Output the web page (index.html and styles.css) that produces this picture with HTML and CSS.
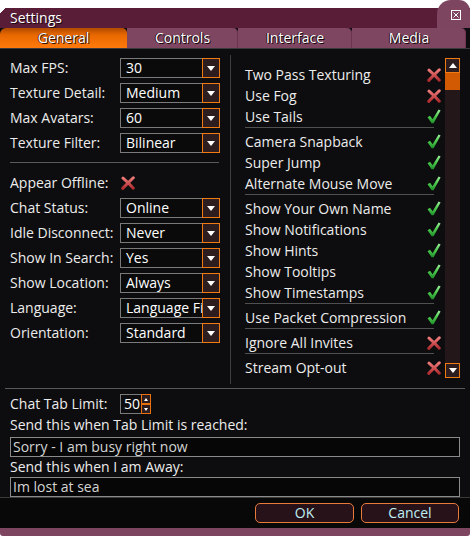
FILE: index.html
```html
<!DOCTYPE html>
<html>
<head>
<meta charset="utf-8">
<title>Settings</title>
<link rel="stylesheet" href="styles.css">
</head>
<body>
<svg class="defs" width="0" height="0">
  <defs>
    <linearGradient id="gchk" x1="0" y1="0" x2="0" y2="1">
      <stop offset="0" stop-color="#9cf09c"/>
      <stop offset="0.5" stop-color="#4cc94c"/>
      <stop offset="1" stop-color="#1e8f2a"/>
    </linearGradient>
    <linearGradient id="gx" x1="0" y1="0" x2="0" y2="1">
      <stop offset="0" stop-color="#ee7a7a"/>
      <stop offset="1" stop-color="#b02c30"/>
    </linearGradient>
    <symbol id="chk" viewBox="0 0 14 15">
      <path d="M0.5 8.2 L3 6.8 L5.6 10.2 L11.6 0.6 L13.6 1.6 L6.6 14.2 L4.6 14.2 Z" fill="url(#gchk)"/>
    </symbol>
    <symbol id="xx" viewBox="0 0 14 14">
      <path d="M2 2.2 Q7 6.5 12.3 12.2 M12.3 1.8 Q7 7 1.8 12.4" fill="none" stroke="url(#gx)" stroke-width="3" stroke-linecap="round"/>
    </symbol>
  </defs>
</svg>
<div class="window">
  <div class="titlebar">
    <span class="title">Settings</span>
    <div class="close-bump">
      <svg class="close-icon" width="10" height="10" viewBox="0 0 10 10"><rect x="0.5" y="0.5" width="9" height="9" fill="none" stroke="#fff"/><path d="M2.5 2.5 L7.5 7.5 M7.5 2.5 L2.5 7.5" stroke="#fff" stroke-width="1"/></svg>
    </div>
  </div>
  <div class="tabs">
    <div class="tab active t1">General</div>
    <div class="tab t2">Controls</div>
    <div class="tab t3">Interface</div>
    <div class="tab t4">Media</div>
  </div>
  <div class="body">
    <div class="columns">
      <div class="left">
        <div class="group">
          <div class="row"><span class="label">Max FPS:</span><div class="select"><span class="val">30</span><span class="dd"><i class="tri-down"></i></span></div></div>
          <div class="row"><span class="label">Texture Detail:</span><div class="select"><span class="val">Medium</span><span class="dd"><i class="tri-down"></i></span></div></div>
          <div class="row"><span class="label">Max Avatars:</span><div class="select"><span class="val">60</span><span class="dd"><i class="tri-down"></i></span></div></div>
          <div class="row"><span class="label">Texture Filter:</span><div class="select"><span class="val">Bilinear</span><span class="dd"><i class="tri-down"></i></span></div></div>
        </div>
        <div class="lsep"></div>
        <div class="group">
          <div class="row"><span class="label">Appear Offline:</span><svg class="icon off-icon" width="14" height="14"><use href="#xx"/></svg></div>
          <div class="row"><span class="label">Chat Status:</span><div class="select"><span class="val">Online</span><span class="dd"><i class="tri-down"></i></span></div></div>
          <div class="row"><span class="label">Idle Disconnect:</span><div class="select"><span class="val">Never</span><span class="dd"><i class="tri-down"></i></span></div></div>
          <div class="row"><span class="label">Show In Search:</span><div class="select"><span class="val">Yes</span><span class="dd"><i class="tri-down"></i></span></div></div>
          <div class="row"><span class="label">Show Location:</span><div class="select"><span class="val">Always</span><span class="dd"><i class="tri-down"></i></span></div></div>
          <div class="row"><span class="label">Language:</span><div class="select"><span class="val">Language Filter</span><span class="dd"><i class="tri-down"></i></span></div></div>
          <div class="row"><span class="label">Orientation:</span><div class="select"><span class="val">Standard</span><span class="dd"><i class="tri-down"></i></span></div></div>
        </div>
      </div>
      <div class="vsep"></div>
      <div class="right">
        <div class="list">
          <div class="item"><span>Two Pass Texturing</span><svg class="icon" width="14" height="14"><use href="#xx"/></svg></div>
          <div class="item"><span>Use Fog</span><svg class="icon" width="14" height="14"><use href="#xx"/></svg></div>
          <div class="item"><span>Use Tails</span><svg class="icon" width="14" height="15"><use href="#chk"/></svg></div>
          <div class="rsep"></div>
          <div class="item"><span>Camera Snapback</span><svg class="icon" width="14" height="15"><use href="#chk"/></svg></div>
          <div class="item"><span>Super Jump</span><svg class="icon" width="14" height="15"><use href="#chk"/></svg></div>
          <div class="item"><span>Alternate Mouse Move</span><svg class="icon" width="14" height="15"><use href="#chk"/></svg></div>
          <div class="rsep"></div>
          <div class="item"><span>Show Your Own Name</span><svg class="icon" width="14" height="15"><use href="#chk"/></svg></div>
          <div class="item"><span>Show Notifications</span><svg class="icon" width="14" height="15"><use href="#chk"/></svg></div>
          <div class="item"><span>Show Hints</span><svg class="icon" width="14" height="15"><use href="#chk"/></svg></div>
          <div class="item"><span>Show Tooltips</span><svg class="icon" width="14" height="15"><use href="#chk"/></svg></div>
          <div class="item"><span>Show Timestamps</span><svg class="icon" width="14" height="15"><use href="#chk"/></svg></div>
          <div class="rsep"></div>
          <div class="item"><span>Use Packet Compression</span><svg class="icon" width="14" height="15"><use href="#chk"/></svg></div>
          <div class="rsep"></div>
          <div class="item"><span>Ignore All Invites</span><svg class="icon" width="14" height="14"><use href="#xx"/></svg></div>
          <div class="rsep"></div>
          <div class="item"><span>Stream Opt-out</span><svg class="icon" width="14" height="14"><use href="#xx"/></svg></div>
        </div>
        <div class="scrollbar">
          <div class="sbtn"><i class="tri-up"></i></div>
          <div class="thumb"></div>
          <div class="track"></div>
          <div class="sbtn"><i class="tri-down"></i></div>
        </div>
      </div>
    </div>
    <div class="hsep"></div>
    <div class="bottom">
      <div class="chat-row">
        <span class="label">Chat Tab Limit:</span>
        <div class="spin"><span class="spin-val">50</span><span class="spin-btns"><span class="spin-half"><i class="tri-up small"></i></span><span class="spin-half"><i class="tri-down small"></i></span></span></div>
      </div>
      <div class="field-label first">Send this when Tab Limit is reached:</div>
      <div class="input">Sorry - I am busy right now</div>
      <div class="field-label">Send this when I am Away:</div>
      <div class="input">Im lost at sea</div>
    </div>
  </div>
  <div class="footer">
    <div class="btn ok">OK</div>
    <div class="btn cancel">Cancel</div>
  </div>
  <div class="strip"></div>
</div>
</body>
</html>
```

FILE: styles.css
```css
html, body {
  margin: 0;
  padding: 0;
  background: #ffffff;
}
body {
  font-family: "Open Sans", "Noto Sans", sans-serif;
  font-size: 14px;
  color: #ececec;
}
.defs {
  position: absolute;
  width: 0;
  height: 0;
}
.window {
  width: 470px;
  margin-top: 8px;
  display: flex;
  flex-direction: column;
}
.titlebar {
  height: 20px;
  position: relative;
  background: linear-gradient(135deg, transparent 4px, #5a1d37 4px);
}
.title {
  display: block;
  padding-left: 10px;
  line-height: 20px;
  color: #ffffff;
  text-shadow: 1px 1px 0 #1a0810;
}
.close-bump {
  position: absolute;
  right: 0;
  top: -8px;
  width: 33px;
  height: 28px;
  background: #7e4560;
  border-radius: 14px 11px 0 0;
}
.close-icon {
  position: absolute;
  left: 14px;
  top: 10px;
}
.tabs {
  display: flex;
  height: 20px;
  background: #0d0c0e;
}
.tab {
  line-height: 20px;
  text-align: center;
  color: #ffffff;
  background: #7e4660;
  border-radius: 0 5px 0 0;
  box-shadow: inset -1px 0 0 #6c3450;
  text-shadow: 1px 1px 0 #1a0a10, -1px 0 0 #2a1018;
}
.tab.active {
  background: linear-gradient(to bottom, #b04a00 0%, #e86800 35%, #ff7a0c 100%);
  border-radius: 6px 5px 0 0;
  box-shadow: none;
  text-shadow: 1px 1px 0 #3a1400, -1px 0 0 #5a2400;
}
.t1 { width: 127px; }
.t2 { width: 111px; }
.t3 { width: 114px; }
.t4 { width: 114px; }

.body {
  border-top: 1px solid #3a3a3c;
  background: #0d0c0e;
}
.columns {
  display: flex;
  height: 335px;
}
.left {
  width: 230px;
  box-sizing: border-box;
  padding: 9px 0 0 10px;
}
.group {
  display: flex;
  flex-direction: column;
  gap: 5px;
}
.row {
  display: flex;
  align-items: center;
  height: 20px;
}
.label {
  width: 110px;
  flex: none;
  white-space: nowrap;
  line-height: 20px;
}
.select {
  display: flex;
  width: 100px;
  height: 20px;
  box-sizing: border-box;
  border: 1px solid #7a7a7a;
  background: #0a0a0a;
  position: relative;
}
.val {
  flex: 1;
  min-width: 0;
  overflow: hidden;
  white-space: nowrap;
  padding-left: 5px;
  line-height: 18px;
  color: #ffffff;
}
.dd {
  flex: none;
  width: 18px;
  height: 20px;
  margin: -1px -1px -1px 0;
  box-sizing: border-box;
  border: 1px solid #f27a12;
  background: #2e1d1f;
  display: flex;
  align-items: center;
  justify-content: center;
}
.tri-down {
  display: block;
  width: 0;
  height: 0;
  border-left: 4px solid transparent;
  border-right: 4px solid transparent;
  border-top: 5px solid #ffffff;
}
.tri-up {
  display: block;
  width: 0;
  height: 0;
  border-left: 4px solid transparent;
  border-right: 4px solid transparent;
  border-bottom: 5px solid #ffffff;
}
.tri-up.small {
  border-left-width: 2.5px;
  border-right-width: 2.5px;
  border-bottom-width: 3px;
}
.tri-down.small {
  border-left-width: 2.5px;
  border-right-width: 2.5px;
  border-top-width: 3px;
}
.off-icon {
  margin-left: 1px;
}
.lsep {
  height: 1px;
  background: #5a5a5a;
  margin: 9px 11px 10px 0;
}
.vsep {
  width: 1px;
  background: #3e3e40;
  margin-top: 6px;
}
.right {
  display: flex;
  padding-left: 14px;
}
.list {
  width: 196px;
  padding-top: 15px;
}
.item {
  display: flex;
  justify-content: space-between;
  align-items: center;
  height: 21px;
  white-space: nowrap;
  color: #ececec;
}
.icon {
  flex: none;
  display: block;
}
.rsep {
  width: 189px;
  height: 1px;
  background: #505050;
  margin-bottom: 3px;
}
.scrollbar {
  margin-left: 4px;
  margin-top: 9px;
  width: 15px;
  height: 320px;
  display: flex;
  flex-direction: column;
}
.sbtn {
  width: 15px;
  height: 15px;
  box-sizing: border-box;
  border: 1px solid #f27a12;
  background: #2e1d1f;
  display: flex;
  align-items: center;
  justify-content: center;
}
.thumb {
  height: 17px;
  background: #d25a02;
}
.track {
  flex: 1;
  background: #231719;
}
.hsep {
  height: 1px;
  background: #5a5a5a;
  margin: 4px 5px 0;
}
.bottom {
  padding: 0 10px;
}
.chat-row {
  display: flex;
  align-items: center;
  height: 20px;
  margin-top: 5px;
}
.spin {
  display: flex;
  width: 31px;
  height: 20px;
  box-sizing: border-box;
  border: 1px solid #7a7a7a;
}
.spin-val {
  flex: 1;
  line-height: 18px;
  padding-left: 3px;
  color: #ffffff;
}
.spin-btns {
  width: 10px;
  display: flex;
  flex-direction: column;
  margin: -1px -1px -1px 0;
}
.spin-half {
  flex: 1;
  box-sizing: border-box;
  border: 1px solid #e8700e;
  background: #2e1d1f;
  display: flex;
  align-items: center;
  justify-content: center;
}
.field-label {
  height: 20px;
  line-height: 20px;
  white-space: nowrap;
}
.field-label.first {
  margin-top: 1px;
  margin-bottom: 2px;
}
.input {
  height: 20px;
  box-sizing: border-box;
  border: 1px solid #8a8a8a;
  background: #060606;
  color: #d4d4d4;
  padding-left: 2px;
  line-height: 18px;
  white-space: nowrap;
}
.footer {
  height: 30px;
  border-top: 1px solid #3a3a3a;
  background: #080808;
  display: flex;
  justify-content: flex-end;
  align-items: flex-start;
  gap: 7px;
  padding: 5px 11px 0 0;
  box-sizing: content-box;
  height: 25px;
}
.btn {
  height: 20px;
  box-sizing: border-box;
  border: 1px solid #e87a3a;
  border-radius: 5px;
  background: #27121a;
  color: #bfeef2;
  text-align: center;
  line-height: 18px;
}
.ok { width: 99px; }
.cancel { width: 98px; }
.strip {
  height: 8px;
  background: #7e4560;
  border-radius: 0 0 3px 3px;
}
```
